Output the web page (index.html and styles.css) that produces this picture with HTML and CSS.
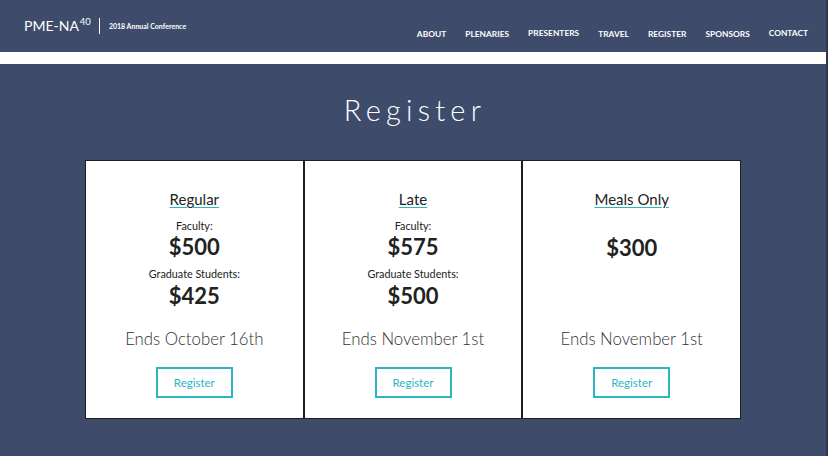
FILE: index.html
```html
<!DOCTYPE html>
<html>
<head>
	<title>Register - PME-NA 40</title>
	<meta charset="UTF-8">
	<link rel="stylesheet" href="styles.css">
</head>
<body>
<div class="page">
	<div class="header">
		<div class="brand">
			<span class="logo">PME-NA<sup>40</sup></span>
			<span class="bar"></span>
			<span class="tagline">2018 Annual Conference</span>
		</div>
		<ul class="nav">
			<li>ABOUT</li>
			<li>PLENARIES</li>
			<li class="up">PRESENTERS</li>
			<li>TRAVEL</li>
			<li>REGISTER</li>
			<li>SPONSORS</li>
			<li class="up">CONTACT</li>
		</ul>
	</div>
	<div class="strip"></div>
	<h1 class="title">Register</h1>
	<div class="cards">
		<div class="card">
			<h2>Regular</h2>
			<div class="prices">
				<p class="label">Faculty:</p>
				<p class="price">$500</p>
				<p class="label second">Graduate Students:</p>
				<p class="price">$425</p>
			</div>
			<p class="ends">Ends October 16th</p>
			<a href="javascript:;" class="btn">Register</a>
		</div>
		<div class="card">
			<h2>Late</h2>
			<div class="prices">
				<p class="label">Faculty:</p>
				<p class="price">$575</p>
				<p class="label second">Graduate Students:</p>
				<p class="price">$500</p>
			</div>
			<p class="ends">Ends November 1st</p>
			<a href="javascript:;" class="btn">Register</a>
		</div>
		<div class="card">
			<h2>Meals Only</h2>
			<div class="prices">
				<p class="label">&nbsp;</p>
				<p class="price">$300</p>
			</div>
			<p class="ends">Ends November 1st</p>
			<a href="javascript:;" class="btn">Register</a>
		</div>
	</div>
</div>
</body>
</html>
```

FILE: styles.css
```css
html, body { margin: 0; padding: 0; }
body { background: #2f374d; font-family: Lato, "Open Sans", sans-serif; height: 456px; overflow: hidden; }
.page { background: #3e4b6b; margin-right: 2px; height: 456px; }

.header { height: 52px; display: flex; justify-content: space-between; align-items: flex-start; }
.brand { display: flex; align-items: center; padding: 17px 0 0 24px; color: #fff; }
.logo { font-size: 14px; line-height: 18px; }
.logo sup { font-size: 9.5px; vertical-align: 6px; line-height: 0; margin-left: 1px; }
.bar { width: 1px; height: 16px; background: #fff; margin: 0 9px 0 8px; }
.tagline { font-size: 7px; font-weight: bold; }
.nav { list-style: none; margin: 0; padding: 29px 18px 0 0; display: flex; gap: 19px; }
.nav li { color: #fff; font-size: 8.4px; font-weight: bold; line-height: 11px; }
.nav li.up { margin-top: -1px; }

.strip { height: 12px; background: #fff; }

.title { margin: 0; padding: 29px 0 0 4px; height: 63px; box-sizing: border-box; text-align: center; color: #fff; font-weight: 300; font-size: 29px; line-height: 34px; letter-spacing: 5.2px; }

.cards { width: 656px; margin: 33px auto 0; display: flex; }
.card { flex: 1; background: #fff; border: 1px solid #1e1e1e; padding: 28px 0 20px; display: flex; flex-direction: column; align-items: center; text-align: center; color: #222; }
.card h2 { margin: 0; font-size: 15px; line-height: 20px; font-weight: normal; text-decoration: underline; text-decoration-color: #2bb6c4; text-underline-offset: 2px; }
.prices { height: 92px; margin-top: 9px; }
.prices p { margin: 0; }
.label { font-size: 10.8px; line-height: 16px; }
.label.second { margin-top: 6px; }
.price { font-size: 22px; line-height: 26px; font-weight: bold; }
.price:last-child { margin-top: 1px; }
.ends { margin: 17px 0 0; font-size: 16.8px; line-height: 24px; font-weight: 300; color: #333; }
.btn { margin-top: 16px; width: 77px; height: 31px; box-sizing: border-box; border: 2px solid #2bb6c4; color: #2bb6c4; font-size: 11.5px; line-height: 27px; text-decoration: none; }
```
